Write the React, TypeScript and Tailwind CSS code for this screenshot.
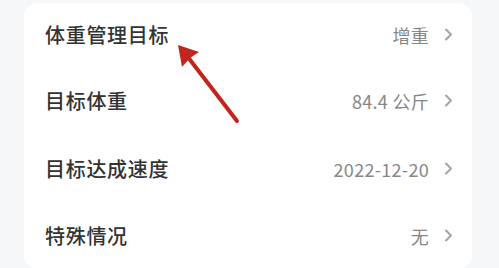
import React from "react";

const rows = [
  { label: "体重管理目标", value: "增重", h: "h-[63px]" },
  { label: "目标体重", value: "84.4 公斤", h: "h-[69px]" },
  { label: "目标达成速度", value: "2022-12-20", h: "h-[67px]" },
  { label: "特殊情况", value: "无", h: "h-[67px]" },
];

function Chevron() {
  return (
    <svg width="9" height="13" viewBox="0 0 9 13" className="shrink-0">
      <path d="M2 1.5 L7 6.5 L2 11.5" fill="none" stroke="#a3a3a3" strokeWidth="2" strokeLinecap="round" strokeLinejoin="round" />
    </svg>
  );
}

export default function App() {
  return (
    <div
      className="relative w-[499px] h-[268px] overflow-hidden bg-[#f6f7f9]"
      style={{ fontFamily: '"Noto Sans CJK SC", "Noto Sans", sans-serif' }}
    >
      <div className="ml-[24px] mt-[3px] w-[448px] rounded-[14px] bg-white flex flex-col">
        {rows.map((r) => (
          <div key={r.label} className={`${r.h} flex items-center pl-[21px] pr-[19px]`}>
            <span className="text-[20px] tracking-[0.7px] text-[#333333] font-medium leading-none">{r.label}</span>
            <span className="ml-auto text-[18px] tracking-[0.3px] text-[#878787] leading-none">{r.value}</span>
            <span className="ml-[15px] flex items-center">
              <Chevron />
            </span>
          </div>
        ))}
      </div>
      <svg className="absolute left-0 top-0 pointer-events-none" width="499" height="268" viewBox="0 0 499 268">
        <line x1="237" y1="121" x2="184" y2="52" stroke="#c2251d" strokeWidth="4" strokeLinecap="round" />
        <path d="M178 45 L199 52 L190 58 L182 67 Z" fill="#c2251d" />
      </svg>
    </div>
  );
}
